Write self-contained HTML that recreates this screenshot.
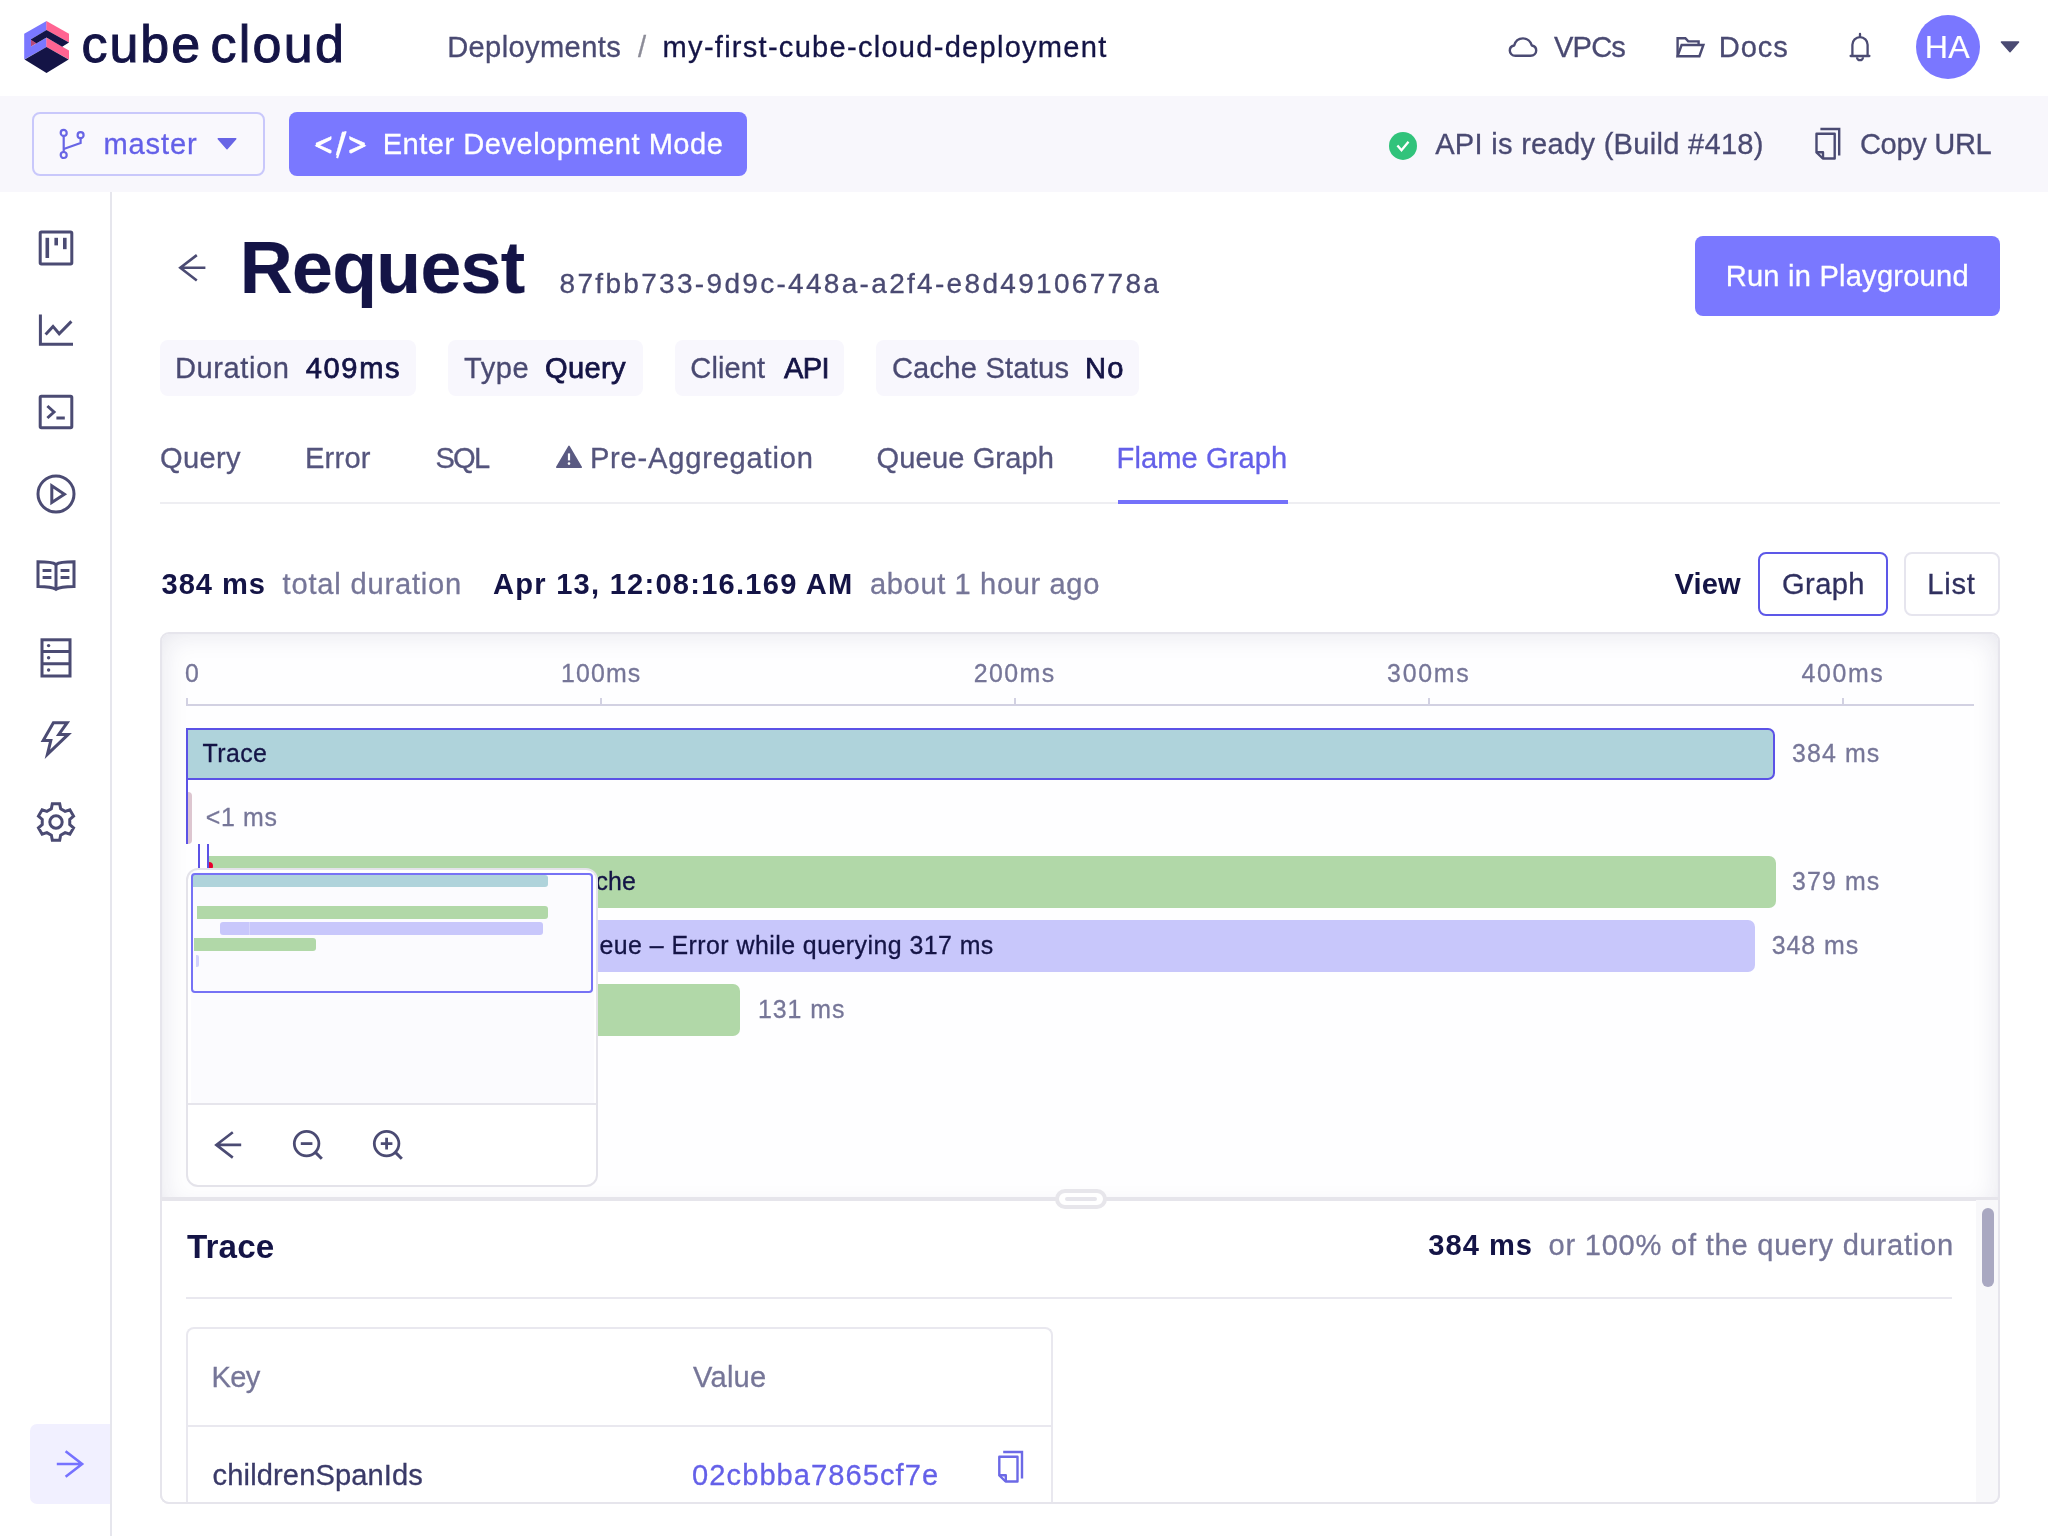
<!DOCTYPE html>
<html lang="en">
<head>
<meta charset="utf-8">
<title>Cube Cloud - Request</title>
<style>
*{box-sizing:border-box;margin:0;padding:0}
html,body{width:2048px;height:1536px;overflow:hidden;background:#fff}
body{position:relative;font-family:"Liberation Sans",sans-serif;color:#141446}
.a{position:absolute}
.t{position:absolute;white-space:pre;line-height:1em;font-family:"Liberation Sans",sans-serif}
svg{position:absolute;overflow:visible}
.ic{fill:none;stroke:#4b4b73;stroke-width:3;stroke-linecap:butt;stroke-linejoin:miter}
.chip{position:absolute;top:340px;height:56px;background:#f8f7fd;border-radius:8px}
</style>
</head>
<body>
<!-- ===== sub header band ===== -->
<div class="a" style="left:0;top:96px;width:2048px;height:96px;background:#f8f7fc"></div>
<!-- ===== sidebar border ===== -->
<div class="a" style="left:110px;top:192px;width:2px;height:1344px;background:#e6e6ed"></div>

<!-- ===== logo ===== -->
<svg style="left:0;top:0" width="96" height="96" viewBox="0 0 96 96">
  <polygon fill="#7a77ff" points="24.2,33.8 46.6,20.9 46.6,30.1 31,39.2 31,46.6 46.6,37.6 46.6,46.9 24.2,59.6"/>
  <polygon fill="#ff6492" points="46.4,20.9 69,33.8 69,42.6 46.4,30.1"/>
  <polygon fill="#ff6492" points="46.4,37.6 69,50.6 69,59.6 46.4,46.9"/>
  <polygon fill="#141446" points="31,39.2 46.5,30.1 69,42.6 62.2,46.7 46.5,37.6 36.2,43.4 31,40.2"/>
  <polygon fill="#b5487a" points="31,39.8 36.4,43.2 31,46.4"/>
  <polygon fill="#141446" points="24.6,59.6 46.5,46.9 68.6,59.6 46.5,73"/>
</svg>

<!-- ===== header right icons ===== -->
<!-- cloud -->
<svg style="left:1507px;top:33px" width="32" height="28" viewBox="0 0 32 28">
  <path d="M8.5,22.8 C5,22.8 2.8,20.4 2.8,17.6 C2.8,15 4.6,12.9 7.2,12.5 C8.3,8.2 11.8,5.4 16,5.4 C20.2,5.4 23.8,8.3 24.8,12.5 C27.4,12.9 29.2,15 29.2,17.6 C29.2,20.4 27,22.8 23.5,22.8 Z" fill="none" stroke="#4b4b73" stroke-width="2.4" stroke-linejoin="round"/>
</svg>
<!-- folder open -->
<svg style="left:1675px;top:34px" width="32" height="28" viewBox="0 0 32 28">
  <path d="M2.6,22.2 V4.2 H10.4 L13.2,7.4 H23.6 V11" fill="none" stroke="#4b4b73" stroke-width="2.4" stroke-linejoin="miter"/>
  <path d="M2.6,22.2 L6.6,11 H28.4 L24.4,22.2 Z" fill="none" stroke="#4b4b73" stroke-width="2.4" stroke-linejoin="miter"/>
</svg>
<!-- bell -->
<svg style="left:1845px;top:31px" width="30" height="34" viewBox="0 0 30 34">
  <g fill="none" stroke="#4b4b73" stroke-width="2.3">
    <path d="M5.6,25 H24.4" stroke-linecap="round"/>
    <path d="M7.4,25 V13.7 A7.6,7.6 0 0 1 22.6,13.7 V25"/>
    <path d="M15,2.9 V5.6" stroke-linecap="round"/>
    <path d="M12,26.2 A3,3 0 0 0 18,26.2"/>
  </g>
</svg>
<!-- avatar -->
<div class="a" style="left:1916px;top:15px;width:64px;height:64px;border-radius:50%;background:#7a77ff"></div>
<!-- header caret -->
<svg style="left:1998px;top:38px" width="26" height="18" viewBox="0 0 26 18">
  <path d="M3.4,4 H20.6 L12,13.8 Z" fill="#4b4b73" stroke="#4b4b73" stroke-width="1.4" stroke-linejoin="round"/>
</svg>

<!-- ===== sub header controls ===== -->
<div class="a" style="left:32px;top:112px;width:233px;height:64px;border:2px solid #c9c8fb;border-radius:8px;background:#f9f8fd"></div>
<!-- branch icon -->
<svg style="left:56px;top:126px" width="32" height="36" viewBox="0 0 32 36">
  <g fill="none" stroke="#6865e5" stroke-width="2.2">
    <circle cx="7.7" cy="6.9" r="3"/>
    <circle cx="24.6" cy="9.2" r="3"/>
    <circle cx="7.7" cy="29" r="3"/>
    <path d="M7.7,9.9 V26"/>
    <path d="M24.6,12.2 V17 L7.7,23"/>
  </g>
</svg>
<!-- master caret -->
<svg style="left:214px;top:134px" width="26" height="20" viewBox="0 0 26 20">
  <path d="M4.2,4.8 H21.8 L13,14.8 Z" fill="#6865e5" stroke="#6865e5" stroke-width="1.4" stroke-linejoin="round"/>
</svg>
<!-- dev mode button -->
<div class="a" style="left:289px;top:112px;width:458px;height:64px;border-radius:8px;background:#7a78ff"></div>
<svg style="left:312px;top:126px" width="58" height="36" viewBox="0 0 58 36">
  <g fill="none" stroke="#fff" stroke-width="2.1">
    <path d="M18.8,12.9 L4.9,19.8 L18.8,26.7"/>
    <path d="M33.7,5.3 L25.1,32.1"/>
    <path d="M38.2,12.9 L52.1,19.8 L38.2,26.7"/>
  </g>
</svg>
<!-- check circle -->
<svg style="left:1387px;top:130px" width="32" height="32" viewBox="0 0 32 32">
  <circle cx="16" cy="15.9" r="14" fill="#31c37b"/>
  <path d="M10.4,15.4 L14.5,20.2 L21.5,11.7" fill="none" stroke="#fff" stroke-width="2.3"/>
</svg>
<!-- copy icon -->
<svg style="left:1812px;top:126px" width="32" height="36" viewBox="0 0 32 36">
  <g fill="none" stroke="#4b4b73" stroke-width="2.4" stroke-linejoin="round">
    <path d="M8.4,3 H27.2 V29.6" stroke-linejoin="miter"/>
    <path d="M4.5,7.7 H22.7 V32.5 H10.8 L4.5,26.4 Z"/>
    <path d="M4.5,26.2 H11 V32.5"/>
  </g>
</svg>

<!-- ===== sidebar icons ===== -->
<!-- 1 kanban -->
<svg style="left:36px;top:228px" width="40" height="40" viewBox="0 0 40 40">
  <rect x="4.2" y="4" width="31.6" height="32" rx="1.2" class="ic"/>
  <path d="M11.3,9.8 V30" stroke="#4b4b73" stroke-width="3.6" fill="none"/>
  <path d="M20.2,9.8 V17.4" stroke="#4b4b73" stroke-width="3.6" fill="none"/>
  <path d="M28.8,9.8 V21.2" stroke="#4b4b73" stroke-width="3.6" fill="none"/>
</svg>
<!-- 2 line chart -->
<svg style="left:36px;top:310px" width="40" height="40" viewBox="0 0 40 40">
  <path d="M4.4,4.4 V34.2 H37" class="ic"/>
  <path d="M9.6,24.4 L17,16.4 L23.2,23.8 L35.4,11.4" class="ic" stroke-linejoin="round"/>
</svg>
<!-- 3 terminal -->
<svg style="left:36px;top:392px" width="40" height="40" viewBox="0 0 40 40">
  <rect x="4.2" y="4.2" width="31.6" height="31.6" rx="1.2" class="ic"/>
  <path d="M11.4,14 L18,20 L11.4,26" class="ic" stroke-width="2.8"/>
  <path d="M20.4,26 H28.8" class="ic" stroke-width="2.8"/>
</svg>
<!-- 4 play circle -->
<svg style="left:34px;top:472px" width="44" height="44" viewBox="0 0 44 44">
  <circle cx="22" cy="22" r="18" class="ic"/>
  <path d="M17.8,13.8 V30.4 L30.4,22.2 Z" class="ic" stroke-width="2.8" stroke-linejoin="round"/>
</svg>
<!-- 5 book -->
<svg style="left:34px;top:556px" width="44" height="40" viewBox="0 0 44 40">
  <path d="M22,8.4 C19,6.4 15,5.8 4,5.8 V30.4 C15,30.4 19,31.2 22,33.4 C25,31.2 29,30.4 40,30.4 V5.8 C29,5.8 25,6.4 22,8.4 Z" class="ic" stroke-linejoin="round"/>
  <path d="M22,8.4 V33" class="ic" stroke-width="2.6"/>
  <path d="M8.6,14.6 H17.4 M8.6,21.4 H17.4 M26.6,14.6 H35.4 M26.6,21.4 H35.4" class="ic" stroke-width="2.6"/>
</svg>
<!-- 6 database -->
<svg style="left:36px;top:636px" width="40" height="44" viewBox="0 0 40 44">
  <rect x="6" y="3.8" width="28" height="36.2" class="ic" stroke-width="2.8"/>
  <path d="M6,15.4 H34 M6,27.8 H34" class="ic" stroke-width="2.6"/>
  <circle cx="12.6" cy="9.6" r="1.7" fill="#4b4b73"/>
  <circle cx="12.6" cy="21.8" r="1.7" fill="#4b4b73"/>
  <circle cx="12.6" cy="34" r="1.7" fill="#4b4b73"/>
</svg>
<!-- 7 thunderbolt -->
<svg style="left:36px;top:718px" width="40" height="44" viewBox="0 0 40 44">
  <path d="M17.4,4.7 H31.2 L22.8,16.4 H32.2 L11.4,36.4 L14.8,22.6 H7.2 Z" class="ic" stroke-width="2.8" stroke-miterlimit="4.2"/>
</svg>
<!-- 8 gear -->
<svg style="left:34px;top:800px" width="44" height="44" viewBox="0 0 44 44">
  <path d="M17.33,8.80 L18.32,3.87 L25.68,3.87 L26.67,8.80 L31.10,11.36 L35.86,9.75 L39.54,16.12 L35.76,19.44 L35.76,24.56 L39.54,27.88 L35.86,34.25 L31.10,32.64 L26.67,35.20 L25.68,40.13 L18.32,40.13 L17.33,35.20 L12.90,32.64 L8.14,34.25 L4.46,27.88 L8.24,24.56 L8.24,19.44 L4.46,16.12 L8.14,9.75 L12.90,11.36 Z" class="ic" stroke-width="2.9" stroke-linejoin="round"/>
  <circle cx="22" cy="22" r="6.2" class="ic" stroke-width="2.9"/>
</svg>
<!-- collapse button -->
<div class="a" style="left:30px;top:1424px;width:80px;height:80px;background:#f1f0ff;border-radius:7px 0 0 7px"></div>
<svg style="left:52px;top:1448px" width="36" height="32" viewBox="0 0 36 32">
  <path d="M4.8,16 H29.4 M13.6,3.3 L30.1,16 L13.6,28.7" fill="none" stroke="#7672ff" stroke-width="2.6"/>
</svg>

<!-- ===== title row ===== -->
<svg style="left:174px;top:250px" width="36" height="36" viewBox="0 0 36 36">
  <path d="M31.4,17.8 H7 M22.8,5.1 L6.3,17.8 L22.8,30.5" fill="none" stroke="#4b4b73" stroke-width="2.6"/>
</svg>
<div class="a" style="left:1695px;top:236px;width:305px;height:80px;border-radius:8px;background:#7a78ff"></div>

<!-- ===== chips ===== -->
<div class="chip" style="left:160px;width:256px"></div>
<div class="chip" style="left:448px;width:195px"></div>
<div class="chip" style="left:675px;width:169px"></div>
<div class="chip" style="left:876px;width:263px"></div>

<!-- ===== tabs ===== -->
<div class="a" style="left:160px;top:502px;width:1840px;height:2px;background:#eeeef2"></div>
<div class="a" style="left:1118px;top:500px;width:170px;height:4px;background:#7471fa"></div>
<svg style="left:553.6px;top:443px" width="30" height="28" viewBox="0 0 30 28">
  <path d="M15,3.4 L27.2,24.2 H2.8 Z" fill="#5a5a82" stroke="#5a5a82" stroke-width="1.6" stroke-linejoin="round"/>
  <path d="M15,10.4 V17.4" stroke="#fff" stroke-width="2.2" fill="none"/>
  <circle cx="15" cy="20.6" r="1.3" fill="#fff"/>
</svg>

<!-- ===== view buttons ===== -->
<div class="a" style="left:1758px;top:552px;width:130px;height:64px;border:2px solid #5d58e8;border-radius:8px;background:#fff"></div>
<div class="a" style="left:1904px;top:552px;width:96px;height:64px;border:2px solid #e6e5ee;border-radius:8px;background:#fff"></div>

<!-- ===== main container ===== -->
<div class="a" style="left:160px;top:632px;width:1840px;height:872px;border:2px solid #e6e5ec;border-radius:9px;background:#fff;overflow:hidden">
  <!-- graph panel with inset shadow -->
  <div class="a" style="left:-2px;top:-2px;width:1840px;height:580px;background:#fefeff;box-shadow:inset 0 0 28px 1px rgba(30,30,80,0.115), inset 0 0 3px 1px rgba(30,30,80,0.05);border-radius:9px 9px 0 0"></div>
  <div class="a" style="left:-2px;top:567px;width:1840px;height:320px;background:#fff"></div>
</div>
<!-- separator between graph and details -->
<div class="a" style="left:160px;top:1197px;width:1840px;height:4px;background:#e6e5eb"></div>

<!-- axis -->
<div class="a" style="left:186px;top:704px;width:1788px;height:2px;background:#d2d1e2"></div>
<div class="a" style="left:186px;top:698px;width:2px;height:6px;background:#d2d1e2"></div>
<div class="a" style="left:600px;top:698px;width:2px;height:6px;background:#d2d1e2"></div>
<div class="a" style="left:1014px;top:698px;width:2px;height:6px;background:#d2d1e2"></div>
<div class="a" style="left:1428px;top:698px;width:2px;height:6px;background:#d2d1e2"></div>
<div class="a" style="left:1842px;top:698px;width:2px;height:6px;background:#d2d1e2"></div>

<!-- bars -->
<div class="a" style="left:186px;top:728px;width:1589px;height:52px;background:#afd3db;border:2px solid #5b52e6;border-radius:0 7px 7px 0"></div>
<div class="a" style="left:186px;top:728px;width:2px;height:116px;background:#5b52e6"></div>
<div class="a" style="left:188px;top:792px;width:4px;height:52px;background:#ddc6d0;border-radius:0 4px 4px 0"></div>
<div class="a" style="left:198px;top:844px;width:2px;height:26px;background:#5b52e6"></div>
<div class="a" style="left:207px;top:844px;width:2px;height:26px;background:#5b52e6"></div>
<div class="a" style="left:209px;top:856px;width:1567px;height:52px;background:#b1d8a8;border-radius:0 7px 7px 0"></div>
<div class="a" style="left:205px;top:862px;width:8px;height:8px;border-radius:50%;background:#e8002d;clip-path:inset(0 0 0 4px)"></div>
<div class="a" style="left:240px;top:920px;width:1515px;height:52px;background:#c8c7fb;border-radius:7px"></div>
<div class="a" style="left:209px;top:984px;width:531px;height:52px;background:#b1d8a8;border-radius:7px"></div>
<div style="position:absolute;left:0;top:0;width:2048px;height:1536px;will-change:transform">
<span class="t" style="left:595.5px;top:869px;font-size:24.9px;color:#141446;letter-spacing:0.10px;-webkit-text-stroke:0.3px #141446;">che</span>
<span class="t" style="left:599.5px;top:933px;font-size:24.9px;color:#141446;letter-spacing:0.46px;-webkit-text-stroke:0.3px #141446;">eue – Error while querying 317 ms</span>
</div>

<!-- minimap popup -->
<div class="a" style="left:186px;top:868px;width:412px;height:319px;border:2px solid #e4e3ea;border-radius:12px;background:#fff;overflow:hidden">
  <div class="a" style="left:3px;top:2px;width:403px;height:231px;background:#fbfbfe"></div>
  <div class="a" style="left:0;top:233px;width:408px;height:2px;background:#e6e5ec"></div>
</div>
<!-- mini bars -->
<div class="a" style="left:193px;top:875px;width:355px;height:12px;background:#afd3db;border-radius:0 3px 3px 0"></div>
<div class="a" style="left:197px;top:906px;width:351px;height:13px;background:#b1d8a8;border-radius:0 3px 3px 0"></div>
<div class="a" style="left:220px;top:922px;width:323px;height:13px;background:#c8c7fb;border-radius:3px"></div>
<div class="a" style="left:249px;top:922px;width:1px;height:13px;background:#d6d5fc"></div>
<div class="a" style="left:194px;top:938px;width:122px;height:13px;background:#b1d8a8;border-radius:0 3px 3px 0"></div>
<div class="a" style="left:196px;top:955px;width:3px;height:12px;background:#d3d2fb;border-radius:0 2px 2px 0"></div>
<!-- viewport frame -->
<div class="a" style="left:191px;top:873px;width:402px;height:120px;border:2px solid #7672f5;border-radius:4px"></div>
<!-- toolbar icons -->
<svg style="left:210px;top:1128px" width="36" height="32" viewBox="0 0 36 32">
  <path d="M31.2,16.9 H7 M22.8,4.2 L6.3,16.9 L22.8,29.6" fill="none" stroke="#4b4b73" stroke-width="2.6"/>
</svg>
<svg style="left:290px;top:1127.2px" width="36" height="36" viewBox="0 0 36 36">
  <circle cx="16.6" cy="16.6" r="12.3" fill="none" stroke="#4b4b73" stroke-width="2.8"/>
  <path d="M25.4,25.4 L31.8,31.8" stroke="#4b4b73" stroke-width="3" fill="none"/>
  <path d="M10.8,16.6 H22.4" stroke="#4b4b73" stroke-width="2.8" fill="none"/>
</svg>
<svg style="left:370px;top:1127.2px" width="36" height="36" viewBox="0 0 36 36">
  <circle cx="16.6" cy="16.6" r="12.3" fill="none" stroke="#4b4b73" stroke-width="2.8"/>
  <path d="M25.4,25.4 L31.8,31.8" stroke="#4b4b73" stroke-width="3" fill="none"/>
  <path d="M10.8,16.6 H22.4 M16.6,10.8 V22.4" stroke="#4b4b73" stroke-width="2.8" fill="none"/>
</svg>

<!-- resize handle -->
<div class="a" style="left:1055px;top:1189px;width:52px;height:20px;border:4px solid #e7e6eb;border-radius:10px;background:#fff"></div>
<div class="a" style="left:1065px;top:1197px;width:32px;height:4px;background:#e6e5eb;border-radius:2px"></div>

<!-- detail -->
<div class="a" style="left:186px;top:1297px;width:1766px;height:2px;background:#e9e8ef"></div>
<div class="a" style="left:186px;top:1327px;width:867px;height:180px;border:2px solid #e9e8ef;border-radius:8px 8px 0 0;border-bottom:none"></div>
<div class="a" style="left:188px;top:1425px;width:863px;height:2px;background:#e9e8ef"></div>
<svg style="left:994px;top:1448px" width="34" height="40" viewBox="0 0 34 40">
  <g fill="none" stroke="#6c69e6" stroke-width="2.4" stroke-linejoin="round">
    <path d="M9.2,4 H28 V30.6" stroke-linejoin="miter"/>
    <path d="M5.3,8.7 H23.5 V33.5 H11.6 L5.3,27.4 Z"/>
    <path d="M5.3,27.2 H11.8 V33.5"/>
  </g>
</svg>
<!-- scrollbar -->
<div class="a" style="left:1976px;top:1200px;width:22px;height:302px;background:#f8f8fa"></div>
<div class="a" style="left:1982px;top:1208px;width:12px;height:79px;background:#a9a8c1;border-radius:6px"></div>
<!-- mask below container (white) -->
<div class="a" style="left:150px;top:1504px;width:1880px;height:32px;background:#fff"></div>
<div class="a" style="left:160px;top:1494px;width:1840px;height:10px;border:2px solid #e6e5ec;border-top:none;border-radius:0 0 9px 9px"></div>

<div style="position:absolute;left:0;top:0;width:2048px;height:1536px;will-change:transform">
<span class="t" style="left:81.4px;top:18px;font-size:52.0px;color:#141446;letter-spacing:1.99px;-webkit-text-stroke:1.0px #141446;">cube</span>
<span class="t" style="left:210.4px;top:18px;font-size:52.0px;color:#141446;letter-spacing:2.31px;-webkit-text-stroke:1.0px #141446;">cloud</span>
<span class="t" style="left:447.2px;top:33px;font-size:29.1px;color:#4a4a72;letter-spacing:0.37px;-webkit-text-stroke:0.3px #4a4a72;">Deployments</span>
<span class="t" style="left:638.0px;top:33px;font-size:29.1px;color:#8c8c98;-webkit-text-stroke:0.3px #8c8c98;">/</span>
<span class="t" style="left:662.6px;top:33px;font-size:29.1px;color:#141446;letter-spacing:1.25px;-webkit-text-stroke:0.3px #141446;">my-first-cube-cloud-deployment</span>
<span class="t" style="left:1554.0px;top:33px;font-size:29.1px;color:#4a4a72;letter-spacing:-0.82px;-webkit-text-stroke:0.3px #4a4a72;">VPCs</span>
<span class="t" style="left:1718.7px;top:33px;font-size:29.1px;color:#4a4a72;letter-spacing:0.96px;-webkit-text-stroke:0.3px #4a4a72;">Docs</span>
<span class="t" style="left:1924.7px;top:31px;font-size:32.2px;color:#ffffff;letter-spacing:0.43px;-webkit-text-stroke:0.15px #ffffff;">HA</span>
<span class="t" style="left:103.4px;top:130px;font-size:29.1px;color:#6460e8;letter-spacing:0.89px;-webkit-text-stroke:0.3px #6460e8;">master</span>
<span class="t" style="left:314.5px;top:129px;font-size:31.1px;color:#ffffff;letter-spacing:3.32px;-webkit-text-stroke:0.3px #ffffff;">&lt;/&gt;</span>
<span class="t" style="left:382.7px;top:130px;font-size:29.1px;color:#ffffff;letter-spacing:0.49px;-webkit-text-stroke:0.3px #ffffff;">Enter Development Mode</span>
<span class="t" style="left:1435.2px;top:130px;font-size:29.1px;color:#4a4a72;letter-spacing:0.27px;-webkit-text-stroke:0.3px #4a4a72;">API is ready (Build #418)</span>
<span class="t" style="left:1859.9px;top:130px;font-size:29.1px;color:#4a4a72;letter-spacing:-0.33px;-webkit-text-stroke:0.3px #4a4a72;">Copy URL</span>
<span class="t" style="left:239.8px;top:232px;font-size:73.4px;color:#141446;font-weight:700;letter-spacing:-0.71px;-webkit-text-stroke:0.2px #141446;">Request</span>
<span class="t" style="left:559.6px;top:270px;font-size:28.0px;color:#4a4a72;letter-spacing:2.31px;-webkit-text-stroke:0.3px #4a4a72;">87fbb733-9d9c-448a-a2f4-e8d49106778a</span>
<span class="t" style="left:1725.7px;top:262px;font-size:29.1px;color:#ffffff;letter-spacing:0.22px;-webkit-text-stroke:0.3px #ffffff;">Run in Playground</span>
<span class="t" style="left:175.0px;top:354px;font-size:29.1px;color:#4a4a72;letter-spacing:0.57px;-webkit-text-stroke:0.3px #4a4a72;">Duration</span>
<span class="t" style="left:305.7px;top:354px;font-size:29.1px;color:#141446;letter-spacing:1.66px;-webkit-text-stroke:0.75px #141446;">409ms</span>
<span class="t" style="left:463.9px;top:354px;font-size:29.1px;color:#4a4a72;letter-spacing:0.58px;-webkit-text-stroke:0.3px #4a4a72;">Type</span>
<span class="t" style="left:545.0px;top:354px;font-size:29.1px;color:#141446;letter-spacing:0.36px;-webkit-text-stroke:0.75px #141446;">Query</span>
<span class="t" style="left:690.3px;top:354px;font-size:29.1px;color:#4a4a72;letter-spacing:0.07px;-webkit-text-stroke:0.3px #4a4a72;">Client</span>
<span class="t" style="left:784.0px;top:354px;font-size:29.1px;color:#141446;letter-spacing:-0.69px;-webkit-text-stroke:0.75px #141446;">API</span>
<span class="t" style="left:891.9px;top:354px;font-size:29.1px;color:#4a4a72;letter-spacing:0.22px;-webkit-text-stroke:0.3px #4a4a72;">Cache Status</span>
<span class="t" style="left:1085.0px;top:354px;font-size:29.1px;color:#141446;letter-spacing:1.25px;-webkit-text-stroke:0.75px #141446;">No</span>
<span class="t" style="left:159.9px;top:444px;font-size:29.1px;color:#55557d;letter-spacing:0.36px;-webkit-text-stroke:0.3px #55557d;">Query</span>
<span class="t" style="left:304.9px;top:444px;font-size:29.1px;color:#55557d;letter-spacing:0.24px;-webkit-text-stroke:0.3px #55557d;">Error</span>
<span class="t" style="left:435.5px;top:444px;font-size:29.1px;color:#55557d;letter-spacing:-1.80px;-webkit-text-stroke:0.3px #55557d;">SQL</span>
<span class="t" style="left:589.9px;top:444px;font-size:29.1px;color:#55557d;letter-spacing:0.79px;-webkit-text-stroke:0.3px #55557d;">Pre-Aggregation</span>
<span class="t" style="left:876.6px;top:444px;font-size:29.1px;color:#55557d;letter-spacing:0.10px;-webkit-text-stroke:0.3px #55557d;">Queue Graph</span>
<span class="t" style="left:1116.6px;top:444px;font-size:29.1px;color:#6460e8;letter-spacing:0.07px;-webkit-text-stroke:0.3px #6460e8;">Flame Graph</span>
<span class="t" style="left:161.5px;top:570px;font-size:29.1px;color:#141446;font-weight:700;letter-spacing:0.95px;-webkit-text-stroke:0px #141446;">384 ms</span>
<span class="t" style="left:282.6px;top:570px;font-size:29.1px;color:#767698;letter-spacing:0.80px;-webkit-text-stroke:0.3px #767698;">total duration</span>
<span class="t" style="left:493.0px;top:570px;font-size:29.1px;color:#141446;font-weight:700;letter-spacing:1.24px;-webkit-text-stroke:0px #141446;">Apr 13, 12:08:16.169 AM</span>
<span class="t" style="left:870.0px;top:570px;font-size:29.1px;color:#767698;letter-spacing:0.62px;-webkit-text-stroke:0.3px #767698;">about 1 hour ago</span>
<span class="t" style="left:1674.5px;top:570px;font-size:29.1px;color:#141446;font-weight:700;letter-spacing:0.14px;-webkit-text-stroke:0px #141446;">View</span>
<span class="t" style="left:1782.0px;top:570px;font-size:29.1px;color:#30305f;letter-spacing:0.41px;-webkit-text-stroke:0.3px #30305f;">Graph</span>
<span class="t" style="left:1927.2px;top:570px;font-size:29.1px;color:#30305f;letter-spacing:0.80px;-webkit-text-stroke:0.3px #30305f;">List</span>
<span class="t" style="left:185.1px;top:661px;font-size:24.9px;color:#767698;-webkit-text-stroke:0.3px #767698;">0</span>
<span class="t" style="left:561.0px;top:661px;font-size:24.9px;color:#767698;letter-spacing:1.13px;-webkit-text-stroke:0.3px #767698;">100ms</span>
<span class="t" style="left:973.8px;top:661px;font-size:24.9px;color:#767698;letter-spacing:1.43px;-webkit-text-stroke:0.3px #767698;">200ms</span>
<span class="t" style="left:1387.1px;top:661px;font-size:24.9px;color:#767698;letter-spacing:1.75px;-webkit-text-stroke:0.3px #767698;">300ms</span>
<span class="t" style="left:1801.5px;top:661px;font-size:24.9px;color:#767698;letter-spacing:1.65px;-webkit-text-stroke:0.3px #767698;">400ms</span>
<span class="t" style="left:202.4px;top:741px;font-size:24.9px;color:#141446;letter-spacing:0.46px;-webkit-text-stroke:0.3px #141446;">Trace</span>
<span class="t" style="left:1792.1px;top:741px;font-size:24.9px;color:#767698;letter-spacing:1.12px;-webkit-text-stroke:0.3px #767698;">384 ms</span>
<span class="t" style="left:205.7px;top:805px;font-size:24.9px;color:#767698;letter-spacing:0.71px;-webkit-text-stroke:0.3px #767698;">&lt;1 ms</span>
<span class="t" style="left:1792.1px;top:869px;font-size:24.9px;color:#767698;letter-spacing:1.12px;-webkit-text-stroke:0.3px #767698;">379 ms</span>
<span class="t" style="left:1771.8px;top:933px;font-size:24.9px;color:#767698;letter-spacing:0.94px;-webkit-text-stroke:0.3px #767698;">348 ms</span>
<span class="t" style="left:758.0px;top:997px;font-size:24.9px;color:#767698;letter-spacing:0.96px;-webkit-text-stroke:0.3px #767698;">131 ms</span>
<span class="t" style="left:187.0px;top:1230px;font-size:33.2px;color:#141446;font-weight:700;letter-spacing:0.12px;-webkit-text-stroke:0px #141446;">Trace</span>
<span class="t" style="left:1428.3px;top:1231px;font-size:29.1px;color:#141446;font-weight:700;letter-spacing:0.99px;-webkit-text-stroke:0px #141446;">384 ms</span>
<span class="t" style="left:1548.5px;top:1231px;font-size:29.1px;color:#767698;letter-spacing:0.76px;-webkit-text-stroke:0.3px #767698;">or 100% of the query duration</span>
<span class="t" style="left:211.5px;top:1363px;font-size:29.1px;color:#767698;letter-spacing:-0.64px;-webkit-text-stroke:0.3px #767698;">Key</span>
<span class="t" style="left:693.0px;top:1363px;font-size:29.1px;color:#767698;letter-spacing:0.23px;-webkit-text-stroke:0.3px #767698;">Value</span>
<span class="t" style="left:212.6px;top:1461px;font-size:29.1px;color:#3a3a68;letter-spacing:0.12px;-webkit-text-stroke:0.3px #3a3a68;">childrenSpanIds</span>
<span class="t" style="left:692.1px;top:1461px;font-size:29.1px;color:#6460e8;letter-spacing:1.05px;-webkit-text-stroke:0.3px #6460e8;">02cbbba7865cf7e</span>
</div>
</body>
</html>
